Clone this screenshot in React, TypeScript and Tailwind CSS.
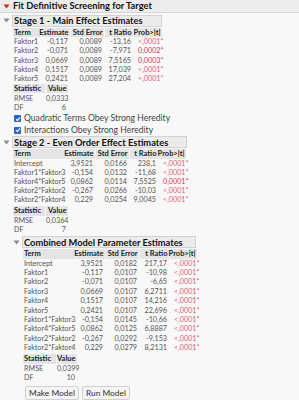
import React from "react";

type R = [string, string, string, string, string];

const s1: R[] = [
  ["Faktor1", "-0,117", "0,0089", "-13,16", "<,0001*"],
  ["Faktor2", "-0,071", "0,0089", "-7,971", "0,0002*"],
  ["Faktor3", "0,0669", "0,0089", "7,5165", "0,0003*"],
  ["Faktor4", "0,1517", "0,0089", "17,039", "<,0001*"],
  ["Faktor5", "0,2421", "0,0089", "27,204", "<,0001*"],
];
const s2: R[] = [
  ["Intercept", "3,9521", "0,0166", "238,1", "<,0001*"],
  ["Faktor1*Faktor3", "-0,154", "0,0132", "-11,68", "<,0001*"],
  ["Faktor4*Faktor5", "0,0862", "0,0114", "7,5525", "0,0001*"],
  ["Faktor2*Faktor2", "-0,267", "0,0266", "-10,03", "<,0001*"],
  ["Faktor2*Faktor4", "0,229", "0,0254", "9,0045", "<,0001*"],
];
const s3: R[] = [
  ["Intercept", "3,9521", "0,0182", "217,17", "<,0001*"],
  ["Faktor1", "-0,117", "0,0107", "-10,98", "<,0001*"],
  ["Faktor2", "-0,071", "0,0107", "-6,65", "<,0001*"],
  ["Faktor3", "0,0669", "0,0107", "6,2711", "<,0001*"],
  ["Faktor4", "0,1517", "0,0107", "14,216", "<,0001*"],
  ["Faktor5", "0,2421", "0,0107", "22,696", "<,0001*"],
  ["Faktor1*Faktor3", "-0,154", "0,0145", "-10,66", "<,0001*"],
  ["Faktor4*Faktor5", "0,0862", "0,0125", "6,8887", "<,0001*"],
  ["Faktor2*Faktor2", "-0,267", "0,0292", "-9,153", "<,0001*"],
  ["Faktor2*Faktor4", "0,229", "0,0279", "8,2131", "<,0001*"],
];

function Disclosure() {
  return (
    <svg width="7" height="5" viewBox="0 0 7 5" className="block">
      <path d="M0.5 0.5 L6.5 0.5 L3.5 4.5 Z" fill="#8a8a8a" />
    </svg>
  );
}

function HeaderCell({ children, left }: { children: React.ReactNode; left?: boolean }) {
  return (
    <div
      className={
        "h-full bg-[#e4e4e4] flex items-center font-bold text-[7.5px] text-[#1e1e1e] whitespace-nowrap " +
        (left ? "justify-start pl-[1px]" : "justify-end pr-[1.5px]")
      }
    >
      {children}
    </div>
  );
}

function DataTable({ grid, rows, rowH }: { grid: string; rows: R[]; rowH: string }) {
  return (
    <div>
      <div className={"grid gap-x-px h-[9.5px] " + grid}>
        <HeaderCell left>Term</HeaderCell>
        <HeaderCell>Estimate</HeaderCell>
        <HeaderCell>Std Error</HeaderCell>
        <HeaderCell>t Ratio</HeaderCell>
        <HeaderCell>Prob&gt;|t|</HeaderCell>
      </div>
      {rows.map((r) => (
        <div key={r[0]} className={"grid gap-x-px items-center " + grid + " " + rowH}>
          <div className="pl-[1px] whitespace-nowrap">{r[0]}</div>
          <div className="text-right pr-[2px]">{r[1]}</div>
          <div className="text-right pr-[2px]">{r[2]}</div>
          <div className="text-right pr-[2px]">{r[3]}</div>
          <div
            className={
              "pl-[4px] whitespace-nowrap " +
              (r[4].startsWith("<") ? "text-[#e25a70]" : "text-[#e0364e]")
            }
          >
            {r[4]}
          </div>
        </div>
      ))}
    </div>
  );
}

function StatTable({ grid, rmse, df }: { grid: string; rmse: string; df: string }) {
  return (
    <div>
      <div className={"grid gap-x-px h-[9.5px] " + grid}>
        <HeaderCell left>Statistic</HeaderCell>
        <HeaderCell>Value</HeaderCell>
      </div>
      <div className={"grid gap-x-px items-center h-[9.3px] " + grid}>
        <div className="pl-[1px]">RMSE</div>
        <div className="text-right pr-[2px]">{rmse}</div>
      </div>
      <div className={"grid gap-x-px items-center h-[9.3px] " + grid}>
        <div className="pl-[1px]">DF</div>
        <div className="text-right pr-[2px]">{df}</div>
      </div>
    </div>
  );
}

function Check({ label }: { label: string }) {
  return (
    <div className="flex items-center h-[11.4px] gap-[3px] pl-[1px]">
      <div className="w-[7px] h-[7px] rounded-[1px] bg-[#2a66c8] flex items-center justify-center">
        <svg width="6" height="6" viewBox="0 0 6 6">
          <path d="M1 3.2 L2.4 4.6 L5 1.4" stroke="white" strokeWidth="1.1" fill="none" />
        </svg>
      </div>
      <span className="text-[#444] text-[8.6px] whitespace-nowrap">{label}</span>
    </div>
  );
}

function OutlineHeader({ title, boxW, slotW }: { title: string; boxW: string; slotW: string }) {
  return (
    <div className="flex items-center h-[12px]">
      <div className={"flex justify-center " + slotW}>
        <Disclosure />
      </div>
      <div
        className={
          "h-full flex items-center bg-[#ebebeb] border border-[#d2d2d2] pl-[1px] font-bold text-[9.3px] text-[#111] whitespace-nowrap " +
          boxW
        }
      >
        {title}
      </div>
    </div>
  );
}

export default function App() {
  return (
    <div className="w-[299px] h-[400px] overflow-hidden bg-[#f8f8f8] font-['Lato',sans-serif] text-[7.2px] leading-none text-[#555]">
      <div className="h-[13px] flex items-center bg-[#ececec] border-b border-[#d6d6d6]">
        <div className="w-[13px] flex justify-center">
          <svg width="7" height="5" viewBox="0 0 7 5" className="block">
            <path d="M0.5 0.5 L6.5 0.5 L3.5 4.5 Z" fill="#d42020" />
          </svg>
        </div>
        <span className="font-bold text-[9.3px] text-[#111] whitespace-nowrap">
          Fit Definitive Screening for Target
        </span>
      </div>

      <div className="mt-[1.5px]">
        <OutlineHeader title="Stage 1 - Main Effect Estimates" boxW="w-[150px]" slotW="w-[12px]" />
        <div className="pl-[13px] pt-[1px]">
          <DataTable grid="grid-cols-[27px_29px_33px_28px_28px]" rows={s1} rowH="h-[9.3px]" />
          <div className="mt-[0.5px]">
            <StatTable grid="grid-cols-[32px_22px]" rmse="0,0333" df="6" />
          </div>
          <div className="mt-[1px]">
            <Check label="Quadratic Terms Obey Strong Heredity" />
            <Check label="Interactions Obey Strong Heredity" />
          </div>
        </div>
      </div>

      <div className="mt-[0.3px]">
        <OutlineHeader title="Stage 2 - Even Order Effect Estimates" boxW="w-[175px]" slotW="w-[12px]" />
        <div className="pl-[13px] pt-[1px]">
          <DataTable grid="grid-cols-[52px_29px_33px_28px_27px]" rows={s2} rowH="h-[9.2px]" />
          <div className="mt-[1.5px]">
            <StatTable grid="grid-cols-[32px_22px]" rmse="0,0364" df="7" />
          </div>

          <div className="mt-[2px] -ml-[13px]">
            <OutlineHeader title="Combined Model Parameter Estimates" boxW="w-[174px]" slotW="w-[22px] pl-[10px]" />
            <div className="pl-[23px] pt-[1px]">
              <DataTable grid="grid-cols-[52px_29px_33px_29px_27px]" rows={s3} rowH="h-[9.37px]" />
              <div className="mt-[1.8px]">
                <StatTable grid="grid-cols-[33px_20px]" rmse="0,0399" df="10" />
              </div>
              <div className="mt-[4px] flex gap-[3px] pl-[2px]">
                <div className="h-[14px] px-[3px] flex items-center bg-[#f4f4f4] border border-[#d0d0d0] rounded-[2px] text-[8.4px] text-[#333]">
                  Make Model
                </div>
                <div className="h-[14px] px-[3px] flex items-center bg-[#f4f4f4] border border-[#d0d0d0] rounded-[2px] text-[8.4px] text-[#333]">
                  Run Model
                </div>
              </div>
            </div>
          </div>
        </div>
      </div>
    </div>
  );
}
